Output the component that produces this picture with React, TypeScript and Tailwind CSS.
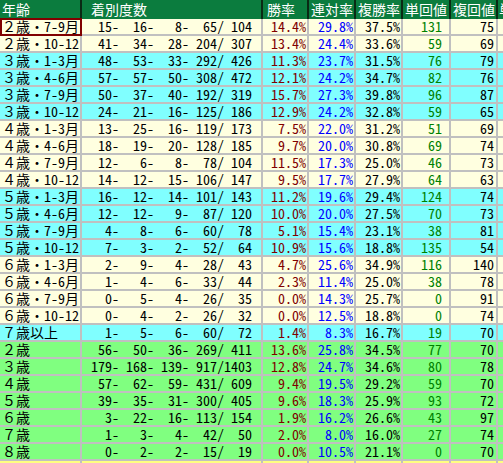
import React from "react";

type Row = {
  label: string;
  d: number[];
  w: string;
  r: string;
  f: string;
  t: string;
  fk: string;
  bg: "cream" | "cyan" | "green";
};

const rows: Row[] = [
  { label: "２歳・7-9月", d: [15, 16, 8, 65, 104], w: "14.4%", r: "29.8%", f: "37.5%", t: "131", fk: "75", bg: "cream" },
  { label: "２歳・10-12", d: [41, 34, 28, 204, 307], w: "13.4%", r: "24.4%", f: "33.6%", t: "59", fk: "69", bg: "cream" },
  { label: "３歳・1-3月", d: [48, 53, 33, 292, 426], w: "11.3%", r: "23.7%", f: "31.5%", t: "76", fk: "79", bg: "cyan" },
  { label: "３歳・4-6月", d: [57, 57, 50, 308, 472], w: "12.1%", r: "24.2%", f: "34.7%", t: "82", fk: "76", bg: "cyan" },
  { label: "３歳・7-9月", d: [50, 37, 40, 192, 319], w: "15.7%", r: "27.3%", f: "39.8%", t: "96", fk: "87", bg: "cyan" },
  { label: "３歳・10-12", d: [24, 21, 16, 125, 186], w: "12.9%", r: "24.2%", f: "32.8%", t: "59", fk: "65", bg: "cyan" },
  { label: "４歳・1-3月", d: [13, 25, 16, 119, 173], w: "7.5%", r: "22.0%", f: "31.2%", t: "51", fk: "69", bg: "cream" },
  { label: "４歳・4-6月", d: [18, 19, 20, 128, 185], w: "9.7%", r: "20.0%", f: "30.8%", t: "69", fk: "74", bg: "cream" },
  { label: "４歳・7-9月", d: [12, 6, 8, 78, 104], w: "11.5%", r: "17.3%", f: "25.0%", t: "46", fk: "73", bg: "cream" },
  { label: "４歳・10-12", d: [14, 12, 15, 106, 147], w: "9.5%", r: "17.7%", f: "27.9%", t: "64", fk: "63", bg: "cream" },
  { label: "５歳・1-3月", d: [16, 12, 14, 101, 143], w: "11.2%", r: "19.6%", f: "29.4%", t: "124", fk: "74", bg: "cyan" },
  { label: "５歳・4-6月", d: [12, 12, 9, 87, 120], w: "10.0%", r: "20.0%", f: "27.5%", t: "70", fk: "73", bg: "cyan" },
  { label: "５歳・7-9月", d: [4, 8, 6, 60, 78], w: "5.1%", r: "15.4%", f: "23.1%", t: "38", fk: "81", bg: "cyan" },
  { label: "５歳・10-12", d: [7, 3, 2, 52, 64], w: "10.9%", r: "15.6%", f: "18.8%", t: "135", fk: "54", bg: "cyan" },
  { label: "６歳・1-3月", d: [2, 9, 4, 28, 43], w: "4.7%", r: "25.6%", f: "34.9%", t: "116", fk: "140", bg: "cream" },
  { label: "６歳・4-6月", d: [1, 4, 6, 33, 44], w: "2.3%", r: "11.4%", f: "25.0%", t: "38", fk: "78", bg: "cream" },
  { label: "６歳・7-9月", d: [0, 5, 4, 26, 35], w: "0.0%", r: "14.3%", f: "25.7%", t: "0", fk: "91", bg: "cream" },
  { label: "６歳・10-12", d: [0, 4, 2, 26, 32], w: "0.0%", r: "12.5%", f: "18.8%", t: "0", fk: "74", bg: "cream" },
  { label: "７歳以上", d: [1, 5, 6, 60, 72], w: "1.4%", r: "8.3%", f: "16.7%", t: "19", fk: "70", bg: "cyan" },
  { label: "２歳", d: [56, 50, 36, 269, 411], w: "13.6%", r: "25.8%", f: "34.5%", t: "77", fk: "70", bg: "green" },
  { label: "３歳", d: [179, 168, 139, 917, 1403], w: "12.8%", r: "24.7%", f: "34.6%", t: "80", fk: "78", bg: "green" },
  { label: "４歳", d: [57, 62, 59, 431, 609], w: "9.4%", r: "19.5%", f: "29.2%", t: "59", fk: "70", bg: "green" },
  { label: "５歳", d: [39, 35, 31, 300, 405], w: "9.6%", r: "18.3%", f: "25.9%", t: "93", fk: "72", bg: "green" },
  { label: "６歳", d: [3, 22, 16, 113, 154], w: "1.9%", r: "16.2%", f: "26.6%", t: "43", fk: "97", bg: "green" },
  { label: "７歳", d: [1, 3, 4, 42, 50], w: "2.0%", r: "8.0%", f: "16.0%", t: "27", fk: "74", bg: "green" },
  { label: "８歳", d: [0, 2, 2, 15, 19], w: "0.0%", r: "10.5%", f: "21.1%", t: "0", fk: "70", bg: "green" },
];

const pad = (n: number, w: number) => String(n).padStart(w, " ");
const fmt = (d: number[]) =>
  `${pad(d[0], 3)}- ${pad(d[1], 3)}- ${pad(d[2], 3)}- ${pad(d[3], 3)}/${pad(d[4], 4)}`;

const bgClass = {
  cream: "bg-[#ffffe0]",
  cyan: "bg-[#80ffff]",
  green: "bg-[#80ff80]",
};

const cell = "h-[17px] border-r-2 border-b-2 border-[#c0c0c0] leading-[15px] overflow-hidden whitespace-pre";
const num = "[font-feature-settings:'hwid'] text-right";
const head = "h-[19px] bg-[#0b7c3e] text-white border-r-2 border-[#0a2a14] leading-[19px] whitespace-pre overflow-hidden";

export default function App() {
  return (
    <div className="w-[503px] h-[463px] overflow-hidden bg-white">
      <div
        className="grid grid-cols-[82px_181px_46px_47px_47px_48px_47px_60px] w-[558px] text-[14px] text-black"
        style={{ fontFamily: "'Noto Sans Mono CJK JP', 'Noto Sans CJK JP', monospace" }}
      >
        <div className={`${head} pl-[2px]`}>年齢</div>
        <div className={`${head} pl-[9px]`}>着別度数</div>
        <div className={`${head} pl-[4px]`}>勝率</div>
        <div className={`${head} pl-[2px]`}>連対率</div>
        <div className={`${head} pl-[2px]`}>複勝率</div>
        <div className={`${head} pl-[2px]`}>単回値</div>
        <div className={`${head} pl-[2px]`}>複回値</div>
        <div className={`${head} pl-[1px]`}>単勝率</div>

        {rows.map((row, i) => {
          const bg = bgClass[row.bg];
          return (
            <React.Fragment key={i}>
              <div className={`${cell} ${bg} pl-[2px] relative overflow-visible`}>
                {row.label}
                {i === 0 && (
                  <div className="absolute left-0 top-[-1px] w-[82px] h-[18px] border-2 border-[#800000]" />
                )}
              </div>
              <div className={`${cell} ${bg} text-center [font-feature-settings:'hwid']`}>{fmt(row.d)}</div>
              <div className={`${cell} ${bg} ${num} pr-[1px] text-[#800000]`}>{row.w}</div>
              <div className={`${cell} ${bg} ${num} pr-[1px] text-[#0000ff]`}>{row.r}</div>
              <div className={`${cell} ${bg} ${num} pr-[1px]`}>{row.f}</div>
              <div className={`${cell} ${bg} ${num} pr-[7px] text-[#008000]`}>{row.t}</div>
              <div className={`${cell} ${bg} ${num} pr-[2px]`}>{row.fk}</div>
              <div className={`${cell} ${bg} ${num} pr-[2px]`}></div>
            </React.Fragment>
          );
        })}

        {Array.from({ length: 8 }).map((_, j) => (
          <div key={`y${j}`} className={`${cell} bg-[#ffff80]`}></div>
        ))}
      </div>
    </div>
  );
}
